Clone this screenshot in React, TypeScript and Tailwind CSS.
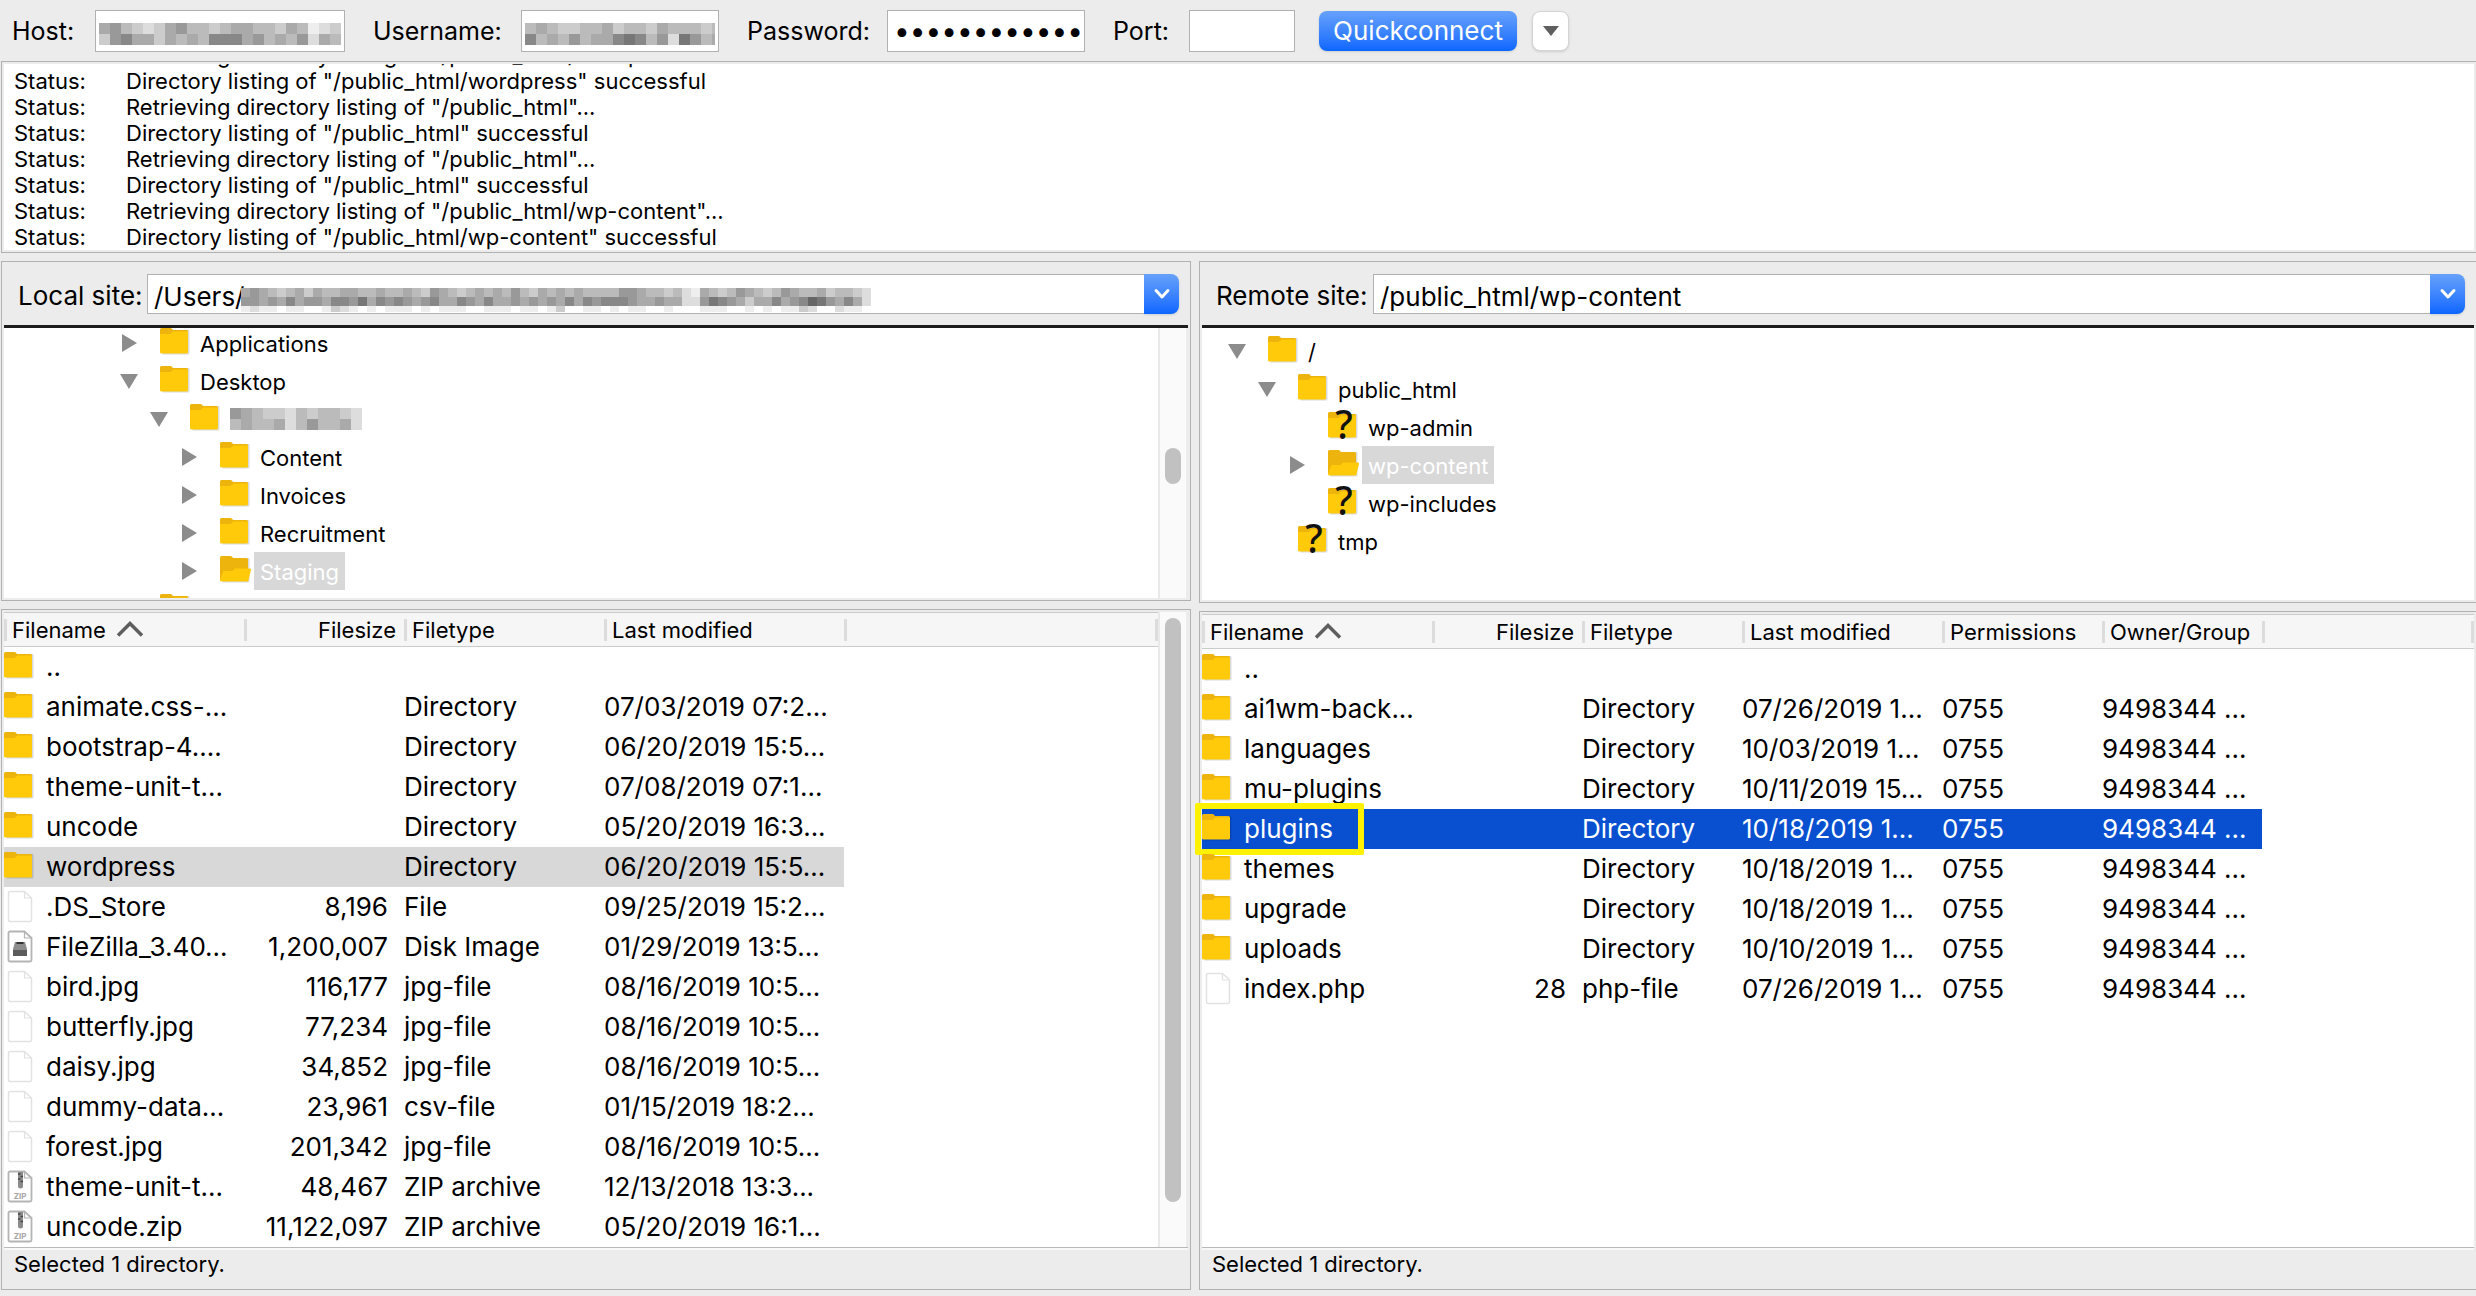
import React from "react";

type IconKind = "folder" | "open" | "unknown" | "file" | "disk" | "zip";

const FONT = "font-['Inter','Liberation_Sans',sans-serif]";

function FolderShape() {
  return (
    <>
      <path d="M1.5 4h27a1 1 0 0 1 1 1v22a1.500 1.500 0 0 1-1.500 1.500H2.500z" fill="#000" opacity=".14" />
      <path d="M0 3.500A1.500 1.500 0 0 1 1.500 2h9a2 2 0 0 1 1.500.7L13 4h13.500A1.500 1.500 0 0 1 28 5.500V12H0z" fill="#ecb40c" />
    </>
  );
}

function Icon({ kind }: { kind: IconKind }) {
  if (kind === "folder" || kind === "unknown") {
    return (
      <svg viewBox="0 0 34 34" className="h-[34px] w-[34px] shrink-0 overflow-visible" aria-hidden="true">
        <FolderShape />
        <path d="M0 8h10.500l3-2.500H27a1 1 0 0 1 1 1v19.500a1.500 1.500 0 0 1-1.500 1.500h-25A1.500 1.500 0 0 1 0 26z" fill="#ffca0a" />
        {kind === "unknown" && (
          <text x="16" y="29" textAnchor="middle" fontFamily="Noto Sans, sans-serif" fontSize="39" fontWeight="500" fill="#111">
            ?
          </text>
        )}
      </svg>
    );
  }
  if (kind === "open") {
    return (
      <svg viewBox="0 0 34 34" className="h-[34px] w-[34px] shrink-0 overflow-visible" aria-hidden="true">
        <FolderShape />
        <path d="M0 5h27a1 1 0 0 1 1 1v20H0z" fill="#ecb40c" />
        <path d="M3.500 17h9l2.500-2.500h15a1 1 0 0 1 1 1.200l-2.500 10.600a1.500 1.500 0 0 1-1.500 1.200H1.500A1.500 1.500 0 0 1 .1 25.600z" fill="#ffca0a" />
      </svg>
    );
  }
  const edge = kind === "file" ? "#e2e2e2" : "#b4b4b4";
  return (
    <svg viewBox="0 0 34 34" className="h-[34px] w-[34px] shrink-0" aria-hidden="true">
      <path d="M6 1.500h14.500L27.500 8v22a1.500 1.500 0 0 1-1.500 1.500H6A1.500 1.500 0 0 1 4.500 30V3A1.500 1.500 0 0 1 6 1.500z" fill="#fff" stroke={edge} strokeWidth={kind === "file" ? 1.500 : 1.800} />
      <path d="M20.500 1.500V8h7" fill="none" stroke={edge} strokeWidth="1.200" />
      {kind === "disk" && (
        <>
          <path d="M11 12h10l2 7v7H9v-7z" fill="#8d8d8d" />
          <path d="M9 20h14v6H9z" fill="#5b5b5b" />
          <path d="M12.500 12h7v2h-7z" fill="#333" />
        </>
      )}
      {kind === "zip" && (
        <>
          <path d="M14 2h5v14a2.500 2.500 0 0 1-5 0z" fill="#8b8b8b" />
          <path d="M14 4h2.500M16.500 6.500H19M14 9h2.500M16.500 11.500H19" stroke="#444" strokeWidth="1.500" />
          <text x="16" y="29" textAnchor="middle" fontFamily="Inter, sans-serif" fontSize="8" fontWeight="700" fill="#a6a6a6">
            ZIP
          </text>
        </>
      )}
    </svg>
  );
}

/* Redacted text: each hex digit is the grey level of one square. */
function Mosaic({ rows, size }: { rows: string[]; size: number }) {
  const w = Math.max(...rows.map((r) => r.length)) * size;
  const h = rows.length * size;
  return (
    <svg width={w} height={h} viewBox={`0 0 ${w} ${h}`} shapeRendering="crispEdges" className="pointer-events-none block shrink-0" aria-hidden="true">
      {rows.flatMap((row, y) =>
        row.split("").map((c, x) => <rect key={`${x}-${y}`} x={x * size} y={y * size} width={size} height={size} fill={`#${c}${c}${c}${c}${c}${c}`} />)
      )}
    </svg>
  );
}

function Field(props: { id: string; label: string; labelClass: string; boxClass: string; type?: string; value?: string; mosaic?: string[] }) {
  return (
    <div className="flex items-center">
      <label htmlFor={props.id} className={`${props.labelClass} text-[25px] leading-8`}>
        {props.label}
      </label>
      <div className={`relative ${props.boxClass}`}>
        <input
          id={props.id}
          type={props.type ?? "text"}
          defaultValue={props.value ?? ""}
          className={`block h-[42px] w-full border border-[#b1b1b1] bg-white pr-[2px] pl-[6px] outline-none ${props.type === "password" ? "text-[28px]" : "text-[25px]"}`}
        />
        {props.mosaic && (
          <div className="absolute inset-x-1 top-[13px] overflow-hidden">
            <Mosaic rows={props.mosaic} size={11} />
          </div>
        )}
      </div>
    </div>
  );
}

function QuickBar() {
  return (
    <form className="flex h-[61px] items-center pl-3" onSubmit={(e) => e.preventDefault()}>
      <Field id="host" label="Host:" labelClass="w-[83px]" boxClass="w-[250px]" mosaic={["a9bcdca9bbcbaabbcabedc", "c98aacabab888a9bab9dab"]} />
      <div className="w-7" />
      <Field id="user" label="Username:" labelClass="w-[148px]" boxClass="w-[198px]" mosaic={["babccbbacbbcabbbcb", "8bab9baa878b9d79ba"]} />
      <div className="w-7" />
      <Field id="pass" label="Password:" labelClass="w-[140px]" boxClass="w-[198px]" type="password" value="secretsecret" />
      <div className="w-7" />
      <Field id="port" label="Port:" labelClass="w-[76px]" boxClass="w-[106px]" />
      <button type="submit" className="ml-6 h-10 w-[198px] rounded-lg bg-linear-to-b from-[#66a1fb] to-[#0a66ff] text-[26px] leading-8 text-white shadow-sm">
        Quickconnect
      </button>
      <button type="button" aria-label="Recent servers" className="ml-[15px] flex h-10 w-[37px] items-center justify-center rounded-lg border border-[#d4d4d4] bg-white shadow-sm">
        <svg width="18" height="12" viewBox="0 0 18 12" aria-hidden="true">
          <path d="M1 1h16L9 11z" fill="#5f5f5f" />
        </svg>
      </button>
    </form>
  );
}

const LOG = [
  'Retrieving directory listing of "/public_html/wordpress"...',
  'Directory listing of "/public_html/wordpress" successful',
  'Retrieving directory listing of "/public_html"...',
  'Directory listing of "/public_html" successful',
  'Retrieving directory listing of "/public_html"...',
  'Directory listing of "/public_html" successful',
  'Retrieving directory listing of "/public_html/wp-content"...',
  'Directory listing of "/public_html/wp-content" successful',
];

function MessageLog() {
  return (
    <section aria-label="Message log" className="ml-px border-y border-l border-[#b1b1b1] p-[2px]">
      <div className="flex h-[186px] flex-col justify-end overflow-hidden bg-white pl-[10px]">
        {LOG.map((text, i) => (
          <div key={i} className="flex shrink-0 text-[22px] leading-[26px]">
            <span className="w-28">Status:</span>
            <span>{text}</span>
          </div>
        ))}
      </div>
    </section>
  );
}

function Scrollbar({ thumb }: { thumb: string }) {
  return (
    <div className="w-[30px] shrink-0 border-r-2 border-l-2 border-r-[#ececec] border-l-[#e9e9e9] bg-[#fafafa] pl-[5px]">
      <div className={`w-4 rounded-full bg-[#c1c1c1] ${thumb}`} />
    </div>
  );
}

function SiteBar({ id, label, labelClass, value, mosaic }: { id: string; label: string; labelClass: string; value: string; mosaic?: string[] }) {
  return (
    <div className="mx-[2px] flex h-[66px] items-start border-b-[3px] border-[#1c1c1c] pt-3 pr-[9px]">
      <label htmlFor={id} className={`${labelClass} shrink-0 text-[26px] leading-[44px]`}>
        {label}
      </label>
      <div className="relative flex-1">
        <input id={id} type="text" defaultValue={value} className="block h-10 w-full border border-r-0 border-[#b1b1b1] bg-white pt-1 pl-[6px] text-[26px] outline-none" />
        {mosaic && (
          <div className="absolute top-[14px] left-[94px] h-6 overflow-hidden">
            <Mosaic rows={mosaic} size={9} />
          </div>
        )}
      </div>
      <button type="button" aria-label={`${label} history`} className="flex h-10 w-[35px] items-center justify-center rounded-r-lg bg-linear-to-b from-[#66a1fb] to-[#0a66ff] shadow-sm">
        <svg width="18" height="12" viewBox="0 0 18 12" aria-hidden="true">
          <path d="M3 2.500l6 6.500 6-6.500" fill="none" stroke="#fff" strokeWidth="3" strokeLinecap="round" strokeLinejoin="round" />
        </svg>
      </button>
    </div>
  );
}

type Node = { label?: string; depth: number; icon: IconKind; arrow?: "down" | "right"; selected?: boolean; mosaic?: string[] };

const LOCAL_TREE: Node[] = [
  { label: "Applications", depth: 0, icon: "folder", arrow: "right" },
  { label: "Desktop", depth: 0, icon: "folder", arrow: "down" },
  { depth: 1, icon: "folder", arrow: "down", mosaic: ["9abccdbcbbcd", "babbadb9bbad"] },
  { label: "Content", depth: 2, icon: "folder", arrow: "right" },
  { label: "Invoices", depth: 2, icon: "folder", arrow: "right" },
  { label: "Recruitment", depth: 2, icon: "folder", arrow: "right" },
  { label: "Staging", depth: 2, icon: "open", arrow: "right", selected: true },
  { depth: 0, icon: "folder" },
];

const REMOTE_TREE: Node[] = [
  { label: "/", depth: 0, icon: "folder", arrow: "down" },
  { label: "public_html", depth: 1, icon: "folder", arrow: "down" },
  { label: "wp-admin", depth: 2, icon: "unknown" },
  { label: "wp-content", depth: 2, icon: "open", arrow: "right", selected: true },
  { label: "wp-includes", depth: 2, icon: "unknown" },
  { label: "tmp", depth: 1, icon: "unknown" },
];

function Tree({ nodes, className }: { nodes: Node[]; className: string }) {
  return (
    <ul role="tree" className={`flex-1 ${className}`}>
      {nodes.map((n, i) => (
        <li key={i} role="treeitem" aria-selected={!!n.selected} className="flex h-[38px] items-center" style={{ paddingLeft: n.depth * 30 }}>
          <span className="flex w-[42px] shrink-0">
            {n.arrow === "down" && (
              <svg width="22" height="20" viewBox="0 0 22 20" aria-hidden="true">
                <path d="M2 3h18l-9 15z" fill="#8c8c8c" />
              </svg>
            )}
            {n.arrow === "right" && (
              <svg width="22" height="20" viewBox="0 0 22 20" aria-hidden="true">
                <path d="M4 1l15 9-15 9z" fill="#8c8c8c" />
              </svg>
            )}
          </span>
          <Icon kind={n.icon} />
          {n.label && <span className={`h-[38px] px-[6px] text-[22px] leading-10 ${n.selected ? "bg-[#d8d8d8] text-white" : ""}`}>{n.label}</span>}
          {n.mosaic && (
            <span className="pl-[6px]">
              <Mosaic rows={n.mosaic} size={11} />
            </span>
          )}
        </li>
      ))}
    </ul>
  );
}

type Column = { title: string; width: string; right?: boolean; sorted?: boolean };
type Row = { icon: IconKind; cells: string[]; state?: "dim" | "active" };

function FileTable({ columns, rows }: { columns: Column[]; rows: Row[] }) {
  return (
    <table className="w-full table-fixed border-collapse text-left">
      <colgroup>
        {columns.map((c) => (
          <col key={c.title} className={c.width} />
        ))}
        <col />
      </colgroup>
      <thead>
        <tr className="h-[34px] border-y border-[#cbcbcb] bg-[#f6f6f6]">
          {columns.map((c) => (
            <th key={c.title} scope="col" className="p-0 text-[22px] font-normal">
              <div className={`flex h-[22px] items-center border-l-[3px] border-[#dcdcdc] pr-2 pl-[5px] leading-[22px] ${c.right ? "justify-end" : ""}`}>
                {c.title}
                {c.sorted && (
                  <svg width="28" height="20" viewBox="0 0 28 20" className="ml-[10px]" aria-hidden="true">
                    <path d="M2 15.500L14 3.500l12 12" fill="none" stroke="#5e5e5e" strokeWidth="3.500" />
                  </svg>
                )}
              </div>
            </th>
          ))}
          <td className="p-0">
            <div className="h-[22px] border-x-[3px] border-[#dcdcdc]" />
          </td>
        </tr>
      </thead>
      <tbody>
        {rows.map((r) => (
          <tr key={r.cells[0]} aria-selected={!!r.state} className={`h-10 text-[26px] leading-10 ${r.state === "active" ? "text-white" : ""}`}>
            {r.cells.map((text, i) => (
              <td
                key={i}
                className={`overflow-visible p-0 whitespace-nowrap ${columns[i].right ? "pr-4 text-right" : ""} ${
                  r.state === "active" ? "bg-[#0850d0]" : r.state === "dim" ? "bg-[#d8d8d8]" : ""
                }`}
              >
                {i === 0 ? (
                  <div className="relative flex h-10 items-center">
                    <Icon kind={r.icon} />
                    <span className="pl-2">{text}</span>
                    {r.state === "active" && <div className="absolute -top-[6px] -left-[7px] h-[52px] w-[169px] rounded-xs border-[6px] border-[#fff200]" />}
                  </div>
                ) : (
                  text
                )}
              </td>
            ))}
            <td />
          </tr>
        ))}
      </tbody>
    </table>
  );
}

const LOCAL_COLUMNS: Column[] = [
  { title: "Filename", width: "w-[240px]", sorted: true },
  { title: "Filesize", width: "w-[160px]", right: true },
  { title: "Filetype", width: "w-[200px]" },
  { title: "Last modified", width: "w-[240px]" },
];

const REMOTE_COLUMNS: Column[] = [
  { title: "Filename", width: "w-[230px]", sorted: true },
  { title: "Filesize", width: "w-[150px]", right: true },
  { title: "Filetype", width: "w-[160px]" },
  { title: "Last modified", width: "w-[200px]" },
  { title: "Permissions", width: "w-[160px]" },
  { title: "Owner/Group", width: "w-[160px]" },
];

const LOCAL_ROWS: Row[] = [
  { icon: "folder", cells: ["..", "", "", ""] },
  { icon: "folder", cells: ["animate.css-...", "", "Directory", "07/03/2019 07:2..."] },
  { icon: "folder", cells: ["bootstrap-4....", "", "Directory", "06/20/2019 15:5..."] },
  { icon: "folder", cells: ["theme-unit-t...", "", "Directory", "07/08/2019 07:1..."] },
  { icon: "folder", cells: ["uncode", "", "Directory", "05/20/2019 16:3..."] },
  { icon: "folder", cells: ["wordpress", "", "Directory", "06/20/2019 15:5..."], state: "dim" },
  { icon: "file", cells: [".DS_Store", "8,196", "File", "09/25/2019 15:2..."] },
  { icon: "disk", cells: ["FileZilla_3.40...", "1,200,007", "Disk Image", "01/29/2019 13:5..."] },
  { icon: "file", cells: ["bird.jpg", "116,177", "jpg-file", "08/16/2019 10:5..."] },
  { icon: "file", cells: ["butterfly.jpg", "77,234", "jpg-file", "08/16/2019 10:5..."] },
  { icon: "file", cells: ["daisy.jpg", "34,852", "jpg-file", "08/16/2019 10:5..."] },
  { icon: "file", cells: ["dummy-data...", "23,961", "csv-file", "01/15/2019 18:2..."] },
  { icon: "file", cells: ["forest.jpg", "201,342", "jpg-file", "08/16/2019 10:5..."] },
  { icon: "zip", cells: ["theme-unit-t... ", "48,467", "ZIP archive", "12/13/2018 13:3..."] },
  { icon: "zip", cells: ["uncode.zip", "11,122,097", "ZIP archive", "05/20/2019 16:1..."] },
];

const REMOTE_ROWS: Row[] = [
  { icon: "folder", cells: ["..", "", "", "", "", ""] },
  { icon: "folder", cells: ["ai1wm-back...", "", "Directory", "07/26/2019 1...", "0755", "9498344 ..."] },
  { icon: "folder", cells: ["languages", "", "Directory", "10/03/2019 1...", "0755", "9498344 ..."] },
  { icon: "folder", cells: ["mu-plugins", "", "Directory", "10/11/2019 15...", "0755", "9498344 ..."] },
  { icon: "folder", cells: ["plugins", "", "Directory", "10/18/2019 1...", "0755", "9498344 ..."], state: "active" },
  { icon: "folder", cells: ["themes", "", "Directory", "10/18/2019 1...", "0755", "9498344 ..."] },
  { icon: "folder", cells: ["upgrade", "", "Directory", "10/18/2019 1...", "0755", "9498344 ..."] },
  { icon: "folder", cells: ["uploads", "", "Directory", "10/10/2019 1...", "0755", "9498344 ..."] },
  { icon: "file", cells: ["index.php", "28", "php-file", "07/26/2019 1...", "0755", "9498344 ..."] },
];

function StatusBar() {
  return (
    <div className="h-[42px] border-t border-[#b9b9b9]">
      <div className="border-t-2 border-[#f8f8f8] pl-[10px] text-[22px] leading-7">Selected 1 directory.</div>
    </div>
  );
}

const LOCAL_PATH = [
  "a9abcbacabbaabbabbabc9abcbabab9bcabababbbb99abbcbdeabcb9abcb9abbacbbcd",
  "99a9a8a99a8897a8989a98aa89a8aa9a9a9a8a898889aa9aadd9789acaa8a98679a8ad",
  "edeefeeffecdefefeeefefeeeffeeefeefecffeefefeeffefffeeeffefefeecdffdeef",
];

function Pane({ children, className }: { children: React.ReactNode; className: string }) {
  return <section className={`flex flex-col border-y border-l border-[#b1b1b1] ${className}`}>{children}</section>;
}

export default function App() {
  return (
    <main className={`flex min-h-screen flex-col overflow-hidden bg-[#ececec] text-black ${FONT}`}>
      <QuickBar />
      <MessageLog />
      <div className="grid flex-1 grid-cols-[1190fr_1277fr] gap-2 pt-2 pb-[7px] pl-px">
        <div className="flex min-w-0 flex-col gap-2">
          <Pane className="border-r pb-[2px]">
            <SiteBar
              id="local"
              label="Local site:"
              labelClass="w-[143px] pl-[14px]"
              value="/Users/"
              mosaic={LOCAL_PATH}
            />
            <div className="mx-[2px] flex h-[270px] overflow-hidden bg-white">
              <Tree nodes={LOCAL_TREE} className="-mt-1 pl-[114px]" />
              <Scrollbar thumb="mt-[120px] h-9" />
            </div>
          </Pane>
          <Pane className="flex-1 border-r px-[2px] pt-[2px]">
            <div className="flex flex-1 bg-white">
              <div className="min-w-0 flex-1">
                <FileTable columns={LOCAL_COLUMNS} rows={LOCAL_ROWS} />
              </div>
              <Scrollbar thumb="mt-[6px] h-[92%]" />
            </div>
            <StatusBar />
          </Pane>
        </div>
        <div className="flex min-w-0 flex-col gap-2">
          <Pane className="pb-[2px]">
            <SiteBar id="remote" label="Remote site:" labelClass="w-[171px] pl-[14px]" value="/public_html/wp-content" />
            <div className="mx-[2px] flex h-[272px] overflow-hidden bg-white">
              <Tree nodes={REMOTE_TREE} className="pt-1 pl-6" />
            </div>
          </Pane>
          <Pane className="flex-1 px-[2px] pt-[2px]">
            <div className="flex-1 bg-white">
              <FileTable columns={REMOTE_COLUMNS} rows={REMOTE_ROWS} />
            </div>
            <StatusBar />
          </Pane>
        </div>
      </div>
    </main>
  );
}
